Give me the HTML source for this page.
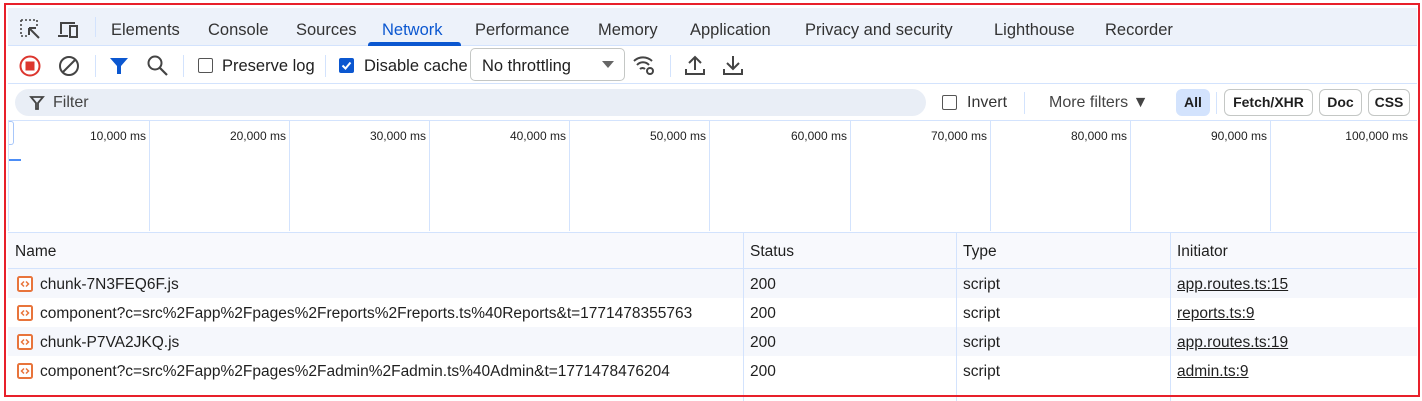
<!DOCTYPE html>
<html><head><style>
*{margin:0;padding:0;box-sizing:border-box}
body{width:1422px;height:401px;background:#fff;font-family:"Liberation Sans",sans-serif;color:#1f1f1f;position:relative;overflow:hidden;font-size:16px}
.a{position:absolute;white-space:nowrap}
.tabs{left:8px;top:8px;width:1409px;height:38px;background:#edf2fa;border-bottom:1px solid #d3e3fd}
.tab{top:21px;font-size:16.5px;color:#333}
.vl{position:absolute;width:1px;background:#d3e3fd}
.hl{position:absolute;height:1px;background:#d3e3fd}
.cell{font-size:15.5px;color:#1f1f1f}
.chip{top:89px;height:27px;border:1px solid #c4c7c5;border-radius:6px;font-size:14px;font-weight:600;line-height:25px;text-align:center;color:#1f1f1f}
.tl{top:129px;font-size:12px;color:#1f1f1f;text-align:right;width:130px}
.ic{position:absolute;width:16px;height:16px}
u{text-decoration:underline}
</style></head><body>
<div class="a tabs"></div>
<svg class="a" style="left:19px;top:18px" width="24" height="24" viewBox="0 0 24 24"><path d="M2 2h16v6M2 2v16h6" fill="none" stroke="#444" stroke-width="1.6" stroke-dasharray="2 2"/><path d="M10 10l10 10M10 10v7M10 10h7" fill="none" stroke="#444" stroke-width="2"/></svg>
<svg class="a" style="left:57px;top:18px" width="24" height="24" viewBox="0 0 24 24"><path d="M4 16V5h14M1 18h10" fill="none" stroke="#444" stroke-width="2"/><rect x="13" y="8" width="7" height="11" fill="none" stroke="#444" stroke-width="2"/></svg>
<div class="vl" style="left:95px;top:17px;height:20px"></div>
<div class="a tab" style="left:111px">Elements</div>
<div class="a tab" style="left:208px">Console</div>
<div class="a tab" style="left:296px">Sources</div>
<div class="a tab" style="left:382px;color:#0b57d0">Network</div>
<div class="a" style="left:368px;top:42px;width:93px;height:4px;background:#0b57d0;border-radius:3px 3px 0 0"></div>
<div class="a tab" style="left:475px">Performance</div>
<div class="a tab" style="left:598px">Memory</div>
<div class="a tab" style="left:690px">Application</div>
<div class="a tab" style="left:805px">Privacy and security</div>
<div class="a tab" style="left:994px">Lighthouse</div>
<div class="a tab" style="left:1105px">Recorder</div>

<svg class="a" style="left:18px;top:54px" width="24" height="24"><circle cx="12" cy="12" r="9.5" fill="none" stroke="#dc362e" stroke-width="2"/><rect x="7.5" y="7.5" width="9" height="9" fill="#dc362e"/></svg>
<svg class="a" style="left:57px;top:54px" width="24" height="24"><circle cx="12" cy="12" r="9" fill="none" stroke="#444" stroke-width="2"/><path d="M6 18L18 6" stroke="#444" stroke-width="2"/></svg>
<div class="vl" style="left:95px;top:55px;height:22px"></div>
<svg class="a" style="left:108px;top:55px" width="22" height="22"><path d="M2 3h18l-7 8v8h-4v-8z" fill="#0b57d0"/></svg>
<svg class="a" style="left:146px;top:54px" width="24" height="24"><circle cx="9" cy="9" r="6.5" fill="none" stroke="#444" stroke-width="2"/><path d="M14 14l7 7" stroke="#444" stroke-width="2.2"/></svg>
<div class="vl" style="left:183px;top:55px;height:22px"></div>
<div class="a" style="left:198px;top:58px;width:15px;height:15px;border:1.5px solid #555;border-radius:2px"></div>
<div class="a" style="left:222px;top:57px;font-size:16.5px">Preserve log</div>
<div class="vl" style="left:325px;top:55px;height:22px"></div>
<div class="a" style="left:339px;top:58px;width:15px;height:15px;background:#0b57d0;border-radius:2px"></div>
<svg class="a" style="left:339px;top:58px" width="15" height="15"><path d="M3.5 7.5l3 3 5-6" fill="none" stroke="#fff" stroke-width="2"/></svg>
<div class="a" style="left:364px;top:57px;font-size:16.5px">Disable cache</div>
<div class="a" style="left:470px;top:48px;width:155px;height:33px;border:1px solid #c4c7c5;border-radius:5px"></div>
<div class="a" style="left:482px;top:57px;font-size:16.5px">No throttling</div>
<svg class="a" style="left:602px;top:61px" width="12" height="8"><path d="M0 0h12L6 7z" fill="#666"/></svg>
<svg class="a" style="left:631px;top:52px" width="26" height="26"><path d="M3 9a13 13 0 0 1 18 0M6 13a8 8 0 0 1 12 0M9 17a3.5 3.5 0 0 1 5 0" fill="none" stroke="#444" stroke-width="2"/><circle cx="19" cy="19" r="3" fill="none" stroke="#444" stroke-width="2"/></svg>
<div class="vl" style="left:670px;top:55px;height:22px"></div>
<svg class="a" style="left:684px;top:53px" width="22" height="24"><path d="M11 17V4M5 10l6-6 6 6M2 16v5h18v-5" fill="none" stroke="#444" stroke-width="2"/></svg>
<svg class="a" style="left:722px;top:53px" width="22" height="24"><path d="M11 3v13M5 10l6 6 6-6M2 16v5h18v-5" fill="none" stroke="#444" stroke-width="2"/></svg>
<div class="hl" style="left:8px;top:83px;width:1409px"></div>

<div class="a" style="left:15px;top:89px;width:911px;height:27px;background:#e9eef6;border-radius:14px"></div>
<svg class="a" style="left:29px;top:95px" width="16" height="16"><path d="M2 2h12l-5 6v6h-2v-6z" fill="none" stroke="#444" stroke-width="1.8"/></svg>
<div class="a" style="left:53px;top:94px;font-size:16px;color:#444">Filter</div>
<div class="a" style="left:942px;top:95px;width:15px;height:15px;border:1.5px solid #555;border-radius:2px"></div>
<div class="a" style="left:967px;top:94px;font-size:16px;color:#333">Invert</div>
<div class="vl" style="left:1024px;top:92px;height:22px"></div>
<div class="a" style="left:1049px;top:94px;font-size:16px;color:#444">More filters ▼</div>
<div class="a chip" style="left:1176px;width:34px;background:#d3e3fd;border-color:#d3e3fd">All</div>
<div class="vl" style="left:1216px;top:92px;height:22px"></div>
<div class="a chip" style="left:1224px;width:89px">Fetch/XHR</div>
<div class="a chip" style="left:1319px;width:43px">Doc</div>
<div class="a chip" style="left:1368px;width:42px">CSS</div>
<div class="hl" style="left:8px;top:120px;width:1409px"></div>

<div class="vl" style="left:8px;top:121px;height:110px"></div>
<div class="vl" style="left:149px;top:121px;height:110px"></div>
<div class="vl" style="left:289px;top:121px;height:110px"></div>
<div class="vl" style="left:429px;top:121px;height:110px"></div>
<div class="vl" style="left:569px;top:121px;height:110px"></div>
<div class="vl" style="left:709px;top:121px;height:110px"></div>
<div class="vl" style="left:850px;top:121px;height:110px"></div>
<div class="vl" style="left:990px;top:121px;height:110px"></div>
<div class="vl" style="left:1130px;top:121px;height:110px"></div>
<div class="vl" style="left:1270px;top:121px;height:110px"></div>
<div class="a" style="left:9px;top:121px;width:5px;height:24px;border:1px solid #a8c7fa;border-left:none;border-radius:0 3px 3px 0"></div>
<div class="a" style="left:9px;top:159px;width:12px;height:2px;background:#4c8df6"></div>
<div class="a tl" style="left:16px">10,000 ms</div>
<div class="a tl" style="left:156px">20,000 ms</div>
<div class="a tl" style="left:296px">30,000 ms</div>
<div class="a tl" style="left:436px">40,000 ms</div>
<div class="a tl" style="left:576px">50,000 ms</div>
<div class="a tl" style="left:717px">60,000 ms</div>
<div class="a tl" style="left:857px">70,000 ms</div>
<div class="a tl" style="left:997px">80,000 ms</div>
<div class="a tl" style="left:1137px">90,000 ms</div>
<div class="a tl" style="left:1278px">100,000 ms</div>

<div class="a" style="left:8px;top:232px;width:1409px;height:37px;background:#f8f9fd;border-top:1px solid #d3e3fd;border-bottom:1px solid #d3e3fd"></div>
<div class="a" style="left:8px;top:269px;width:1409px;height:29px;background:#f5f7fc"></div>
<div class="a" style="left:8px;top:327px;width:1409px;height:29px;background:#f5f7fc"></div>
<div class="vl" style="left:743px;top:232px;height:169px"></div>
<div class="vl" style="left:956px;top:232px;height:169px"></div>
<div class="vl" style="left:1170px;top:232px;height:169px"></div>
<div class="a cell" style="left:15px;top:243px">Name</div>
<div class="a cell" style="left:750px;top:243px">Status</div>
<div class="a cell" style="left:963px;top:243px">Type</div>
<div class="a cell" style="left:1177px;top:243px">Initiator</div>

<svg class="ic" style="left:17px;top:276px"><rect x="1" y="1" width="14" height="14" rx="1.5" fill="#fff" stroke="#e8743b" stroke-width="2"/><path d="M7 5.5L4.5 8 7 10.5M9 5.5L11.5 8 9 10.5" fill="none" stroke="#e8743b" stroke-width="1.5"/></svg>
<svg class="ic" style="left:17px;top:305px"><rect x="1" y="1" width="14" height="14" rx="1.5" fill="#fff" stroke="#e8743b" stroke-width="2"/><path d="M7 5.5L4.5 8 7 10.5M9 5.5L11.5 8 9 10.5" fill="none" stroke="#e8743b" stroke-width="1.5"/></svg>
<svg class="ic" style="left:17px;top:334px"><rect x="1" y="1" width="14" height="14" rx="1.5" fill="#fff" stroke="#e8743b" stroke-width="2"/><path d="M7 5.5L4.5 8 7 10.5M9 5.5L11.5 8 9 10.5" fill="none" stroke="#e8743b" stroke-width="1.5"/></svg>
<svg class="ic" style="left:17px;top:363px"><rect x="1" y="1" width="14" height="14" rx="1.5" fill="#fff" stroke="#e8743b" stroke-width="2"/><path d="M7 5.5L4.5 8 7 10.5M9 5.5L11.5 8 9 10.5" fill="none" stroke="#e8743b" stroke-width="1.5"/></svg>
<div class="a cell" style="left:40px;top:276px">chunk-7N3FEQ6F.js</div>
<div class="a cell" style="left:40px;top:305px">component?c=src%2Fapp%2Fpages%2Freports%2Freports.ts%40Reports&amp;t=1771478355763</div>
<div class="a cell" style="left:40px;top:334px">chunk-P7VA2JKQ.js</div>
<div class="a cell" style="left:40px;top:363px">component?c=src%2Fapp%2Fpages%2Fadmin%2Fadmin.ts%40Admin&amp;t=1771478476204</div>
<div class="a cell" style="left:750px;top:276px">200</div>
<div class="a cell" style="left:750px;top:305px">200</div>
<div class="a cell" style="left:750px;top:334px">200</div>
<div class="a cell" style="left:750px;top:363px">200</div>
<div class="a cell" style="left:963px;top:276px">script</div>
<div class="a cell" style="left:963px;top:305px">script</div>
<div class="a cell" style="left:963px;top:334px">script</div>
<div class="a cell" style="left:963px;top:363px">script</div>
<div class="a cell" style="left:1177px;top:276px"><u>app.routes.ts:15</u></div>
<div class="a cell" style="left:1177px;top:305px"><u>reports.ts:9</u></div>
<div class="a cell" style="left:1177px;top:334px"><u>app.routes.ts:19</u></div>
<div class="a cell" style="left:1177px;top:363px"><u>admin.ts:9</u></div>

<div class="a" style="left:4px;top:3px;width:1416px;height:394px;border:2.5px solid #e8202a"></div>
</body></html>
